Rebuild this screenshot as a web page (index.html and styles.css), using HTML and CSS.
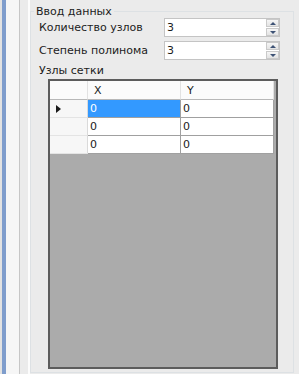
FILE: index.html
```html
<!DOCTYPE html>
<html lang="ru">
<head>
<meta charset="utf-8">
<title>Ввод данных</title>
<link rel="stylesheet" href="styles.css">
</head>
<body>
<div class="app">
  <div class="side"></div>
  <fieldset class="group">
    <legend class="group-title">Ввод данных</legend>
    <div class="field">
      <span class="field-label">Количество узлов</span>
      <div class="spin">
        <span class="spin-value">3</span>
        <div class="spin-btns"><span class="spin-btn up"></span><span class="spin-btn down"></span></div>
      </div>
    </div>
    <div class="field">
      <span class="field-label">Степень полинома</span>
      <div class="spin">
        <span class="spin-value">3</span>
        <div class="spin-btns"><span class="spin-btn up"></span><span class="spin-btn down"></span></div>
      </div>
    </div>
    <div class="grid-label">Узлы сетки</div>
    <div class="grid">
      <div class="row head">
        <div class="cell corner"></div>
        <div class="cell hcell">X</div>
        <div class="cell hcell">Y</div>
      </div>
      <div class="row">
        <div class="cell rh"><span class="arrow"></span></div>
        <div class="cell dc selected">0</div>
        <div class="cell dc">0</div>
      </div>
      <div class="row">
        <div class="cell rh"></div>
        <div class="cell dc">0</div>
        <div class="cell dc">0</div>
      </div>
      <div class="row">
        <div class="cell rh"></div>
        <div class="cell dc">0</div>
        <div class="cell dc">0</div>
      </div>
    </div>
  </fieldset>
</div>
</body>
</html>
```

FILE: styles.css
```css
* { box-sizing: border-box; }
html, body { margin: 0; padding: 0; }
body {
  width: 299px;
  height: 374px;
  overflow: hidden;
  background: #ebebeb;
  font-family: "DejaVu Sans", Verdana, sans-serif;
  font-size: 11px;
  color: #1c1c1c;
}
.app { display: flex; height: 374px; }
.side {
  width: 30px;
  flex: none;
  background: linear-gradient(to right, #e2e2e2 0 2px, #7f9dcc 2px 6px, #f6f6f6 6px 19px, #c6c6c6 19px 20px, #ebebeb 20px 28px, #fcfcfc 28px 30px);
}
.group {
  margin: 5px 0 1px 0;
  padding: 0 0 2px 8px;
  width: 264px;
  min-width: 0;
  border: 1px solid #dde1e4;
  flex: none;
}
.group-title {
  padding: 0 2px;
  margin-left: -5px;
  line-height: 13px;
}
.field {
  display: flex;
  align-items: center;
  height: 19px;
  margin-bottom: 4px;
}
.field-label { width: 125px; flex: none; }
.spin {
  width: 116px;
  height: 19px;
  background: #fff;
  border: 1px solid #c4c4c4;
  display: flex;
  align-items: center;
}
.spin-value { flex: 1; padding-left: 2px; }
.spin-btns {
  width: 13px;
  height: 17px;
  margin-right: 0;
  display: flex;
  flex-direction: column;
  gap: 1px;
}
.spin-btn {
  flex: 1;
  background: linear-gradient(#f6f6f6, #e3e3e3);
  border: 1px solid #cacaca;
  display: flex;
  align-items: center;
  justify-content: center;
}
.spin-btn::after {
  content: "";
  border-left: 3px solid transparent;
  border-right: 3px solid transparent;
}
.up::after { border-bottom: 3px solid #3d5275; }
.down::after { border-top: 3px solid #3d5275; }
.grid-label {
  margin-top: 1px;
  line-height: 13px;
}
.grid {
  margin: 2px 0 0 9px;
  width: 230px;
  height: 290px;
  border: 2px solid #5c5c5c;
  background: #ababab;
}
.row {
  display: grid;
  grid-template-columns: 38px 93px 93px;
  height: 18px;
}
.row.head { height: 19px; }
.cell {
  display: flex;
  align-items: center;
  border-right: 1px solid #a0a0a0;
  border-bottom: 1px solid #a0a0a0;
  background: #fff;
}
.corner, .hcell {
  background: #fbfbfb;
  border-right-color: #e2e2e2;
  border-bottom-color: #b8b8b8;
}
.hcell { padding-left: 6px; }
.rh {
  background: #f7f7f7;
  border-right-color: #dadada;
  border-bottom-color: #e4e4e4;
  padding-left: 6px;
}
.dc { padding-left: 2px; }
.selected { background: #3399ff; color: #fff; }
.arrow {
  width: 0;
  height: 0;
  border-top: 4px solid transparent;
  border-bottom: 4px solid transparent;
  border-left: 5px solid #1a1a1a;
}
```
